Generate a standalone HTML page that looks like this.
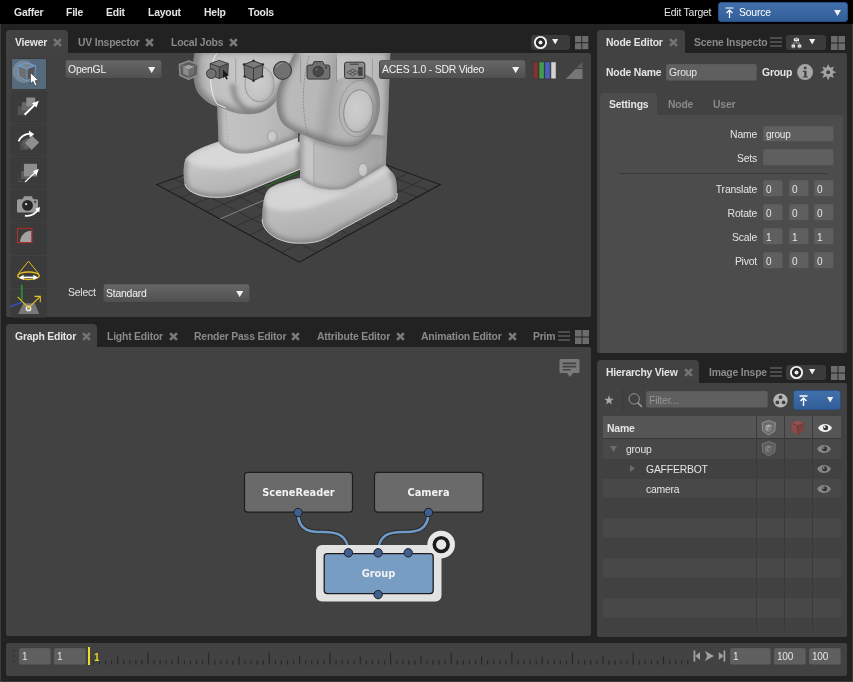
<!DOCTYPE html>
<html><head><meta charset="utf-8"><title>Gaffer</title>
<style>
*{box-sizing:border-box;margin:0;padding:0}
html,body{width:853px;height:682px;overflow:hidden;background:#222;}
body{position:relative;font-family:"Liberation Sans",sans-serif;font-size:10.4px;color:#e4e4e4;letter-spacing:-0.2px}
.abs{position:absolute}
.t{position:absolute;white-space:nowrap;line-height:14px;height:14px}
.t,.field,.dd{will-change:transform}
.r{text-align:right}
.b{font-weight:bold}
.dim{color:#898989}
#menubar{position:absolute;left:0;top:0;width:853px;height:24px;background:#000}
.panel{position:absolute;background:#424242;border-radius:0 2px 2px 2px}
.tab{position:absolute;background:#424242;border-radius:4px 4px 0 0}
.field{position:absolute;background:#5f5f5f;border-radius:2.5px;border:1px solid #5b5b5b;border-bottom-color:#505050;border-right-color:#545454;color:#e6e6e6;line-height:15px;padding-left:2px;font-size:10px;white-space:nowrap;overflow:hidden}
.dd{position:absolute;border-radius:3px;background:linear-gradient(#666,#505050);border:1px solid #4a4a4a;border-top-color:#5a5a5a;border-bottom-color:#404040;line-height:18px;padding-left:2px;color:#f2f2f2;font-size:10.4px;white-space:nowrap}
.tool{position:absolute;left:12px;width:34px;height:30px;background:#3b3b3b;box-shadow:0 0 0 0.7px #373737;border-radius:1px}
svg{position:absolute;overflow:visible}
.pg{left:0;top:0;width:853px;height:682px;pointer-events:none}
</style></head><body>
<svg width="0" height="0" style="position:absolute"><defs>
 <symbol id="x" viewBox="0 0 9 9"><path d="M1.1 1.1 L7.9 7.9 M7.9 1.1 L1.1 7.9" stroke="currentColor" stroke-width="2.6" fill="none"/></symbol>
 <symbol id="grid4" viewBox="0 0 14 14"><path d="M0 0h6.55v6.55h-6.55z M7.45 0h6.55v6.55h-6.55z M0 7.45h6.55v6.55h-6.55z M7.45 7.45h6.55v6.55h-6.55z" fill="#6c6c6c"/></symbol>
 <symbol id="burger" viewBox="0 0 12 10"><path d="M0 1h12 M0 5h12 M0 9h12" stroke="#787878" stroke-width="1.15"/></symbol>
 <symbol id="tri" viewBox="0 0 8 7"><path d="M0 0h8l-4 7z" fill="#f0f0f0"/></symbol>
 <symbol id="eye" viewBox="0 0 14 8"><path d="M0 4 C3 -1.2 11 -1.2 14 4 C11 9.2 3 9.2 0 4z" fill="currentColor"/><circle cx="7.6" cy="3.7" r="2.5" fill="#333"/><circle cx="6.6" cy="2.9" r="1" fill="currentColor"/></symbol>
 <symbol id="cic" viewBox="0 0 16 16"><path d="M8 0.5 L14.8 3 L14.2 11.4 L8 15.5 L1.8 11.4 L1.2 3Z" fill="#6a6a6a" stroke="#9c9c9c" stroke-width="0.9" stroke-linejoin="round"/><path d="M8 4.6 L11.7 6 L8 7.6 L4.3 6Z" fill="#b0b0b0"/><path d="M4.3 6 L8 7.6 V12.4 L4.5 10.6Z" fill="#9a9a9a"/><path d="M11.7 6 L8 7.6 V12.4 L11.5 10.6Z" fill="#7e7e7e"/></symbol>
</defs></svg>
<!-- MENUBAR -->
<div id="menubar">
 <span class="t b" style="left:14px;top:6px">Gaffer</span>
 <span class="t b" style="left:66px;top:6px">File</span>
 <span class="t b" style="left:106px;top:6px">Edit</span>
 <span class="t b" style="left:148px;top:6px">Layout</span>
 <span class="t b" style="left:204px;top:6px">Help</span>
 <span class="t b" style="left:248px;top:6px">Tools</span>
 <span class="t" style="left:664px;top:6px">Edit Target</span>
 <div class="abs" id="src" style="left:717.5px;top:2px;width:130.5px;height:20px;border-radius:3px;background:linear-gradient(#4270aa,#325e98);border:1px solid #2a4f84">
   <svg style="left:6px;top:4px" width="9" height="11" viewBox="0 0 9 11"><path d="M0.5 1h8 M4.5 11V3.2 M1.5 6 L4.5 3 L7.5 6" stroke="#fff" stroke-width="1.2" fill="none"/></svg>
   <span class="t" style="left:20px;top:3px;color:#fff">Source</span>
   <svg style="left:115.3px;top:6.5px" width="7" height="6"><use href="#tri"/></svg>
 </div>
</div>
<!-- winborder -->
<div class="abs" style="left:0;top:24px;width:1px;height:658px;background:#3c3c3c"></div>
<div class="abs" style="left:852px;top:24px;width:1px;height:658px;background:#3a3a3a"></div>
<div class="abs" style="left:0;top:680.6px;width:853px;height:1.4px;background:#3a3a3a"></div>

<!-- VIEWER PANEL -->
<div class="tab" style="left:6px;top:30px;width:62px;height:24px"></div>
<span class="t b" style="left:15px;top:36px">Viewer</span>
<svg style="left:52.7px;top:37.9px;color:#747474" width="9" height="9"><use href="#x"/></svg>
<span class="t b dim" style="left:78px;top:36px">UV Inspector</span>
<svg style="left:144.7px;top:37.9px;color:#7a7a7a" width="9" height="9"><use href="#x"/></svg>
<span class="t b dim" style="left:171px;top:36px">Local Jobs</span>
<svg style="left:228.7px;top:37.9px;color:#7a7a7a" width="9" height="9"><use href="#x"/></svg>
<!-- pin dropdown + grid -->
<div class="abs" style="left:530.5px;top:35px;width:39px;height:15px;border-radius:3px;background:#3b3b3b"></div>
<svg style="left:534px;top:36px" width="13" height="13" viewBox="0 0 13 13"><circle cx="6.5" cy="6.5" r="5.6" fill="#262626" stroke="#f2f2f2" stroke-width="1.9"/><circle cx="6.5" cy="6.5" r="2" fill="#f2f2f2"/></svg>
<svg style="left:552px;top:39px" width="6.4" height="5.4"><use href="#tri"/></svg>
<svg style="left:574.6px;top:35.8px" width="13.6" height="13.6"><use href="#grid4"/></svg>

<div class="panel" id="viewer" style="left:6px;top:53px;width:585px;height:264px;overflow:hidden;background:#414141">

<svg class="pg" style="left:-6px;top:-53px" width="853" height="682" viewBox="0 0 853 682">
<defs>
 <filter id="bl2.2" x="-20%" y="-20%" width="140%" height="140%"><feGaussianBlur stdDeviation="2.2"/></filter>
 <filter id="bl3" x="-20%" y="-20%" width="140%" height="140%"><feGaussianBlur stdDeviation="3"/></filter>
 <filter id="bl1.2" x="-20%" y="-20%" width="140%" height="140%"><feGaussianBlur stdDeviation="1.2"/></filter>
 <linearGradient id="gBody" x1="0" x2="1" y1="0" y2="0"><stop offset="0" stop-color="#c6c6c6"/><stop offset="0.5" stop-color="#c4c4c4"/><stop offset="0.9" stop-color="#b8b8b8"/><stop offset="1" stop-color="#aaaaaa"/></linearGradient>
 <linearGradient id="gLegR" x1="0" x2="1" y1="0" y2="0"><stop offset="0" stop-color="#c8c8c8"/><stop offset="0.155" stop-color="#c6c6c6"/><stop offset="0.16" stop-color="#bcbcbc"/><stop offset="0.6" stop-color="#b0b0b0"/><stop offset="0.9" stop-color="#a4a4a4"/><stop offset="1" stop-color="#b4b4b4"/></linearGradient>
 <linearGradient id="gLegL" x1="0" x2="1" y1="0" y2="0"><stop offset="0" stop-color="#b4b4b4"/><stop offset="0.12" stop-color="#c2c2c2"/><stop offset="0.6" stop-color="#bcbcbc"/><stop offset="1" stop-color="#acacac"/></linearGradient>
 <linearGradient id="gFootL" x1="0.3" y1="0" x2="0.55" y2="1"><stop offset="0" stop-color="#cecece"/><stop offset="0.45" stop-color="#c4c4c4"/><stop offset="0.8" stop-color="#b6b6b6"/><stop offset="1" stop-color="#a8a8a8"/></linearGradient>
 <linearGradient id="gFootR" x1="0.35" y1="0" x2="0.6" y2="1"><stop offset="0" stop-color="#cccccc"/><stop offset="0.4" stop-color="#c2c2c2"/><stop offset="0.8" stop-color="#b2b2b2"/><stop offset="1" stop-color="#a6a6a6"/></linearGradient>
 <linearGradient id="gHipL" x1="0" x2="1" y1="0" y2="0"><stop offset="0" stop-color="#a8a8a8"/><stop offset="0.18" stop-color="#c0c0c0"/><stop offset="0.45" stop-color="#c6c6c6"/><stop offset="1" stop-color="#c0c0c0"/></linearGradient>
 <linearGradient id="gHipR" x1="0" x2="1" y1="0" y2="0.15"><stop offset="0" stop-color="#a4a4a4"/><stop offset="0.2" stop-color="#bababa"/><stop offset="0.45" stop-color="#b8b8b8"/><stop offset="0.58" stop-color="#a4a4a4"/><stop offset="0.7" stop-color="#b6b6b6"/><stop offset="1" stop-color="#b4b4b4"/></linearGradient>
 <radialGradient id="gCap" cx="0.42" cy="0.45" r="0.7"><stop offset="0" stop-color="#cecece"/><stop offset="0.6" stop-color="#c4c4c4"/><stop offset="1" stop-color="#a8a8a8"/></radialGradient>
 <clipPath id="vclip"><rect x="6" y="53" width="586" height="264"/></clipPath>
</defs>
<g clip-path="url(#vclip)">
<path d="M168.4 190.9 L312.8 138.6 M174.1 178.6 L316.9 252.5 M180.5 197.5 L325.0 143.0 M190.7 172.8 L333.6 243.3 M193.1 204.4 L337.7 147.6 M206.6 167.2 L349.4 234.6 M206.2 211.5 L350.8 152.3 M221.7 161.9 L364.4 226.4 M234.4 226.9 L378.4 162.3 M250.3 152.0 L392.1 211.1 M249.5 235.1 L393.0 167.5 M263.7 147.3 L405.0 204.0 M265.3 243.7 L408.1 173.0 M276.6 142.8 L417.3 197.2 M281.9 252.7 L423.8 178.7 M289.0 138.5 L429.0 190.8" stroke="#2b2b2b" stroke-width="0.7" fill="none"/><path d="M156.8 184.6 L299.3 262.2 L440.2 184.6 L301.0 134.3 Z" stroke="#1d1d1d" stroke-width="1.1" fill="none"/>
<path d="M220.0 219.0 L364.3 157.2" stroke="#8a8a8a" stroke-width="0.9"/>
<!-- back body -->
<clipPath id="cp1"><path d="M296 50 L390.4 50 L388.5 106 L386 160 L385.5 168 L300.4 182 L300.4 120 Z"/></clipPath>
<path d="M296 50 L390.4 50 L388.5 106 L386 160 L385.5 168 L300.4 182 L300.4 120 Z" fill="url(#gBody)"/>
<g clip-path="url(#cp1)"><path d="M296 50 L390.4 50 L388.5 106 L386 160 L385.5 168 L300.4 182 L300.4 120 Z" fill="none" stroke="#6a6a6a" stroke-width="6" filter="url(#bl2.2)" opacity="0.5"/></g>

<!-- left foot -->
<clipPath id="cp2"><path d="M220 141 C205 146 190 152 185.5 159 C183 166 183.3 178 184.8 185 C187 192 198 196.5 210 197.6 C222 198.6 232 197 242 193.5 L300.4 169.5 L300.4 135 L297 138 Z"/></clipPath>
<path d="M220 141 C205 146 190 152 185.5 159 C183 166 183.3 178 184.8 185 C187 192 198 196.5 210 197.6 C222 198.6 232 197 242 193.5 L300.4 169.5 L300.4 135 L297 138 Z" fill="url(#gFootL)"/>
<g clip-path="url(#cp2)"><path d="M220 141 C205 146 190 152 185.5 159 C183 166 183.3 178 184.8 185 C187 192 198 196.5 210 197.6 C222 198.6 232 197 242 193.5 L300.4 169.5 L300.4 135 L297 138 Z" fill="none" stroke="#6a6a6a" stroke-width="7" filter="url(#bl2.2)" opacity="0.55"/><path d="M218 141 L192 150 L184 160 L200 167 L225 169 L250 165 L300 147 L300 135Z" fill="#dcdcdc" filter="url(#bl2.2)" opacity="0.8"/></g>

<path d="M184.8 184 C187 191 198 196 210 197 C222 198 232 196.5 242 193 L300.4 169" stroke="#dedede" stroke-width="0.8" fill="none"/>
<path d="M265.4 187 L281 180 L298.5 172.6" stroke="#1e6e1e" stroke-width="1.2" fill="none"/>
<!-- left leg -->
<clipPath id="cp3"><path d="M217 100 L218.6 142 C222 148 232 153 242 153.6 C252 154 268 149 281 144 L298 137.5 L298 96 Z"/></clipPath>
<path d="M217 100 L218.6 142 C222 148 232 153 242 153.6 C252 154 268 149 281 144 L298 137.5 L298 96 Z" fill="url(#gLegL)"/>
<g clip-path="url(#cp3)"><path d="M217 100 L218.6 142 C222 148 232 153 242 153.6 C252 154 268 149 281 144 L298 137.5 L298 96 Z" fill="none" stroke="#6a6a6a" stroke-width="6" filter="url(#bl2.2)" opacity="0.6"/></g>

<ellipse cx="272.3" cy="136.7" rx="5" ry="6" fill="url(#gCap)" stroke="#989898" stroke-width="0.8"/>
<path d="M226 108 L228 148" stroke="#a0a0a0" stroke-width="0.6" stroke-dasharray="2 1.5"/>
<!-- mid connector -->
<path d="M270 48 L300 48 L300 100 L276 100 Z" fill="#c2c2c2"/>
<!-- left hip -->
<clipPath id="cp4"><path d="M196 48 C192.3 60 191.6 78 197 91 C203 100 211 105 219 107 L232 112 C243 115.5 258 115 266 110 C274 105 280 97 282 88 L300 70 L300 48 Z"/></clipPath>
<path d="M196 48 C192.3 60 191.6 78 197 91 C203 100 211 105 219 107 L232 112 C243 115.5 258 115 266 110 C274 105 280 97 282 88 L300 70 L300 48 Z" fill="url(#gHipL)"/>
<g clip-path="url(#cp4)"><path d="M196 48 C192.3 60 191.6 78 197 91 C203 100 211 105 219 107 L232 112 C243 115.5 258 115 266 110 C274 105 280 97 282 88 L300 70 L300 48 Z" fill="none" stroke="#6a6a6a" stroke-width="9" filter="url(#bl3)" opacity="0.75"/><path d="M233 84 C233 98 240 108 251 112 C258 114 268 110 276 103" stroke="#7a7a7a" stroke-width="5.5" fill="none" filter="url(#bl2.2)" opacity="0.75"/></g>

<path d="M217 53.7 C209 62 208 90 217 104 L226 108" stroke="#f4f4f4" stroke-width="0.9" fill="none"/>
<ellipse cx="259.5" cy="84" rx="14.5" ry="18" fill="url(#gCap)" stroke="#8e8e8e" stroke-width="0.8"/>
<path d="M298.8 126 L298.8 142" stroke="#4a4a4a" stroke-width="1.6"/>
<!-- right leg -->
<clipPath id="cp5"><path d="M300.4 130 L300.4 178 C304 182 310 185 316 187 C324 189.5 336 190.5 344 188.6 C352 186 358 181 363 178 L385.5 165 L386.5 136 L371 134 C366 141 358 147 350 147.6 C340 147.5 328 144.5 316 140 Z"/></clipPath>
<path d="M300.4 130 L300.4 178 C304 182 310 185 316 187 C324 189.5 336 190.5 344 188.6 C352 186 358 181 363 178 L385.5 165 L386.5 136 L371 134 C366 141 358 147 350 147.6 C340 147.5 328 144.5 316 140 Z" fill="url(#gLegR)"/>
<g clip-path="url(#cp5)"><path d="M300.4 130 L300.4 178 C304 182 310 185 316 187 C324 189.5 336 190.5 344 188.6 C352 186 358 181 363 178 L385.5 165 L386.5 136 L371 134 C366 141 358 147 350 147.6 C340 147.5 328 144.5 316 140 Z" fill="none" stroke="#6a6a6a" stroke-width="5" filter="url(#bl2.2)" opacity="0.5"/></g>

<path d="M313.8 140.5 L313.8 185.5" stroke="#a2a2a2" stroke-width="0.8"/>
<ellipse cx="363" cy="169.9" rx="4.8" ry="6.6" fill="url(#gCap)" stroke="#949494" stroke-width="0.8"/>
<!-- right hip -->
<clipPath id="cp6"><path d="M296 50 C288 66 279 82 277.5 92 C275 104 277 118 284 125 C290 130 296 132.5 300.3 133.5 L316 140 C328 144.5 340 147.5 350 147.6 C358 147 366 141 371 134 C377 125 380 114 380 104 C380 93 377 83 371 77.5 C366 73.5 358 72.5 350 74.4 L337 80 L337 50 Z"/></clipPath>
<path d="M296 50 C288 66 279 82 277.5 92 C275 104 277 118 284 125 C290 130 296 132.5 300.3 133.5 L316 140 C328 144.5 340 147.5 350 147.6 C358 147 366 141 371 134 C377 125 380 114 380 104 C380 93 377 83 371 77.5 C366 73.5 358 72.5 350 74.4 L337 80 L337 50 Z" fill="url(#gHipR)"/>
<g clip-path="url(#cp6)"><path d="M296 50 C288 66 279 82 277.5 92 C275 104 277 118 284 125 C290 130 296 132.5 300.3 133.5 L316 140 C328 144.5 340 147.5 350 147.6 C358 147 366 141 371 134 C377 125 380 114 380 104 C380 93 377 83 371 77.5 C366 73.5 358 72.5 350 74.4" fill="none" stroke="#6a6a6a" stroke-width="9" filter="url(#bl3)" opacity="0.8"/></g>

<path d="M309 56 C302 80 301 115 309 137" stroke="#777" stroke-width="0.6" fill="none" stroke-dasharray="2 1.2"/>
<ellipse cx="359" cy="108.5" rx="19.5" ry="28.5" fill="none" stroke="#8e8e8e" stroke-width="0.7" transform="rotate(8 359 108.5)"/><ellipse cx="358.4" cy="111" rx="14.5" ry="21.3" fill="url(#gCap)" stroke="#808080" stroke-width="0.8" transform="rotate(8 358.4 111)"/>
<!-- front foot -->
<clipPath id="cp7"><path d="M300.4 178 C290 180 275 184 268.8 189 C264 194 262.5 205 262.2 219 C262 226 266 232 275.8 237.9 C283 241.5 290 243 296.9 243.2 C305 243.4 312 243 318 241.4 C326 239 333 234.5 339 230.8 L395.4 200.3 C397.5 198 397.5 190 395.8 179.2 C394.5 175 393 173 390.7 171 L385.5 165 L363 178 C358 181 352 186 344 188.6 C336 190.5 324 189.5 316 187 C310 185 304 182 300.4 178 Z"/></clipPath>
<path d="M300.4 178 C290 180 275 184 268.8 189 C264 194 262.5 205 262.2 219 C262 226 266 232 275.8 237.9 C283 241.5 290 243 296.9 243.2 C305 243.4 312 243 318 241.4 C326 239 333 234.5 339 230.8 L395.4 200.3 C397.5 198 397.5 190 395.8 179.2 C394.5 175 393 173 390.7 171 L385.5 165 L363 178 C358 181 352 186 344 188.6 C336 190.5 324 189.5 316 187 C310 185 304 182 300.4 178 Z" fill="url(#gFootR)"/>
<g clip-path="url(#cp7)"><path d="M300.4 178 C290 180 275 184 268.8 189 C264 194 262.5 205 262.2 219 C262 226 266 232 275.8 237.9 C283 241.5 290 243 296.9 243.2 C305 243.4 312 243 318 241.4 C326 239 333 234.5 339 230.8 L395.4 200.3 C397.5 198 397.5 190 395.8 179.2 C394.5 175 393 173 390.7 171 L385.5 165 L363 178 C358 181 352 186 344 188.6 C336 190.5 324 189.5 316 187 C310 185 304 182 300.4 178 Z" fill="none" stroke="#6a6a6a" stroke-width="7" filter="url(#bl2.2)" opacity="0.55"/><path d="M268.8 187 L262 198 L266.4 207.4 L285 211 L308.6 208.5 L343.8 195.6 L381.3 177 L392 171 L385.5 164 L363 178 L344 188.6 L316 187 L300.4 177Z" fill="#dadada" filter="url(#bl2.2)" opacity="0.8"/></g>

<path d="M262.2 219 C262 226 266 232 275.8 237.9 C283 241.5 290 243 296.9 243.2 C305 243.4 312 243 318 241.4 C326 239 333 234.5 339 230.8 L395.4 200.3 C397 199 397.3 196 397.2 193" stroke="#e0e0e0" stroke-width="0.8" fill="none"/>
</g>
</svg>
</div>
<!-- tools -->
<div class="tool" style="top:59px;background:#566a7e;overflow:hidden"></div>
<div class="tool" style="top:92px"></div>
<div class="tool" style="top:125px"></div>
<div class="tool" style="top:158px"></div>
<div class="tool" style="top:191px"></div>
<div class="tool" style="top:224px"></div>
<div class="tool" style="top:257px"></div>
<div class="tool" style="top:290px;height:27px"></div>
<!-- toolbar -->
<div class="dd" style="left:65px;top:60px;width:97px;height:19px">OpenGL</div>
<svg style="left:148px;top:66.7px" width="7.4" height="6.2"><use href="#tri"/></svg>
<div class="dd" style="left:379px;top:60px;width:147px;height:19px">ACES 1.0 - SDR Video</div>
<svg style="left:512.3px;top:66.7px" width="7.4" height="6.2"><use href="#tri"/></svg>
<span class="t" style="left:68px;top:286px">Select</span>
<div class="dd" style="left:103px;top:284px;width:147px;height:19px">Standard</div>
<svg style="left:235.5px;top:290.5px" width="7.4" height="6.2"><use href="#tri"/></svg>
<!-- RGB swatch -->
<svg class="pg" width="853" height="682" viewBox="0 0 853 682">
<g stroke="#333" stroke-width="0.6">
<rect x="533" y="61.9" width="5.2" height="17" fill="#823232"/>
<rect x="539" y="61.9" width="5.2" height="17" fill="#429c4e"/>
<rect x="544.9" y="61.9" width="5.2" height="17" fill="#4a60c2"/>
<rect x="550.9" y="61.9" width="5.2" height="17" fill="#d2d2d2"/>
</g>
<path d="M565.8 79 H582.5 V69 H575.5Z" fill="#767676"/>
<path d="M576.3 68 L582.5 61.8 V68Z" fill="#5c5c5c"/>
</svg>
<svg class="pg" width="853" height="682" viewBox="0 0 853 682">
 <!-- tool1: selection -->
 <clipPath id="t1c"><rect x="12" y="59" width="34" height="30"/></clipPath><circle cx="23.8" cy="71.6" r="11.3" fill="#ffffff" fill-opacity="0.19" clip-path="url(#t1c)"/>
 <path d="M17.7 65.7 L27 68.8 L27 81.1 L18.8 76.5Z" fill="#6e6e6e"/>
 <path d="M27 68.8 L35.5 65.7 L34.9 76 L27 81.1Z" fill="#545454"/>
 <path d="M26.5 63 L35.5 65.7 L34.9 76 L27 81.1 L18.8 76.5 L17.7 65.7Z M17.7 65.7 L27 68.8 L35.5 65.7 M27 68.8V81.1" fill="none" stroke="#6fa3da" stroke-width="0.9" stroke-linejoin="round"/>
 <path d="M30.4 72.6 L30.4 83.8 L33 81.5 L35 86 L37 85.1 L35.1 80.7 L38.6 80.6Z" fill="#fff" stroke="#333" stroke-width="0.7" stroke-linejoin="round"/>
 <!-- tool2: translate -->
 <rect x="17.7" y="106.3" width="8.5" height="8.7" fill="#525252"/>
 <rect x="21.8" y="102.2" width="8.5" height="8.3" fill="#686868"/>
 <rect x="26.3" y="97.5" width="8.9" height="8.8" fill="#8c8c8c"/>
 <path d="M24.6 114.8 L35 104.6" stroke="#fff" stroke-width="2" fill="none"/>
 <path d="M38.9 100.8 L32 103.2 L36.5 107.6Z" fill="#fff"/>
 <!-- tool3: rotate -->
 <rect x="20.1" y="143" width="8.4" height="6.8" fill="#4e4e4e"/>
 <path d="M21.5 141.5 L28 137.5 L32 146 L25 149.7Z" fill="#5c5c5c"/>
 <path d="M32.1 135.8 L39.1 142.5 L31.6 149.9 L24.9 143Z" fill="#8e8e8e"/>
 <path d="M18.6 141.4 C20.5 136.5 25 134 30 133.6" stroke="#fff" stroke-width="1.8" fill="none"/>
 <path d="M28.8 130.6 L34.2 134.2 L29.8 137.6Z" fill="#fff"/>
 <!-- tool4: scale -->
 <path d="M19 178v3.5h3.8" stroke="#555" stroke-width="0.8" fill="none"/>
 <rect x="21.1" y="171" width="8" height="8" fill="#5c5c5c"/>
 <rect x="23.9" y="163.8" width="13.1" height="12.6" fill="#8e8e8e"/>
 <path d="M25 182 L35.5 172" stroke="#fff" stroke-width="1.1" fill="none"/>
 <path d="M38.9 168.8 L32.8 171.2 L36.6 175.2Z" fill="#fff"/>
 <!-- tool5: camera -->
 <path d="M18.5 199.3 h4 l1.6 -3 h7.6 l1.6 3 h3.2 a1.5 1.5 0 0 1 1.5 1.5 v10.3 a1.5 1.5 0 0 1 -1.5 1.5 h-18 a1.5 1.5 0 0 1 -1.5 -1.5 v-10.3 a1.5 1.5 0 0 1 1.5 -1.5z" fill="#9a9a9a"/>
 <circle cx="27.5" cy="205.4" r="5.4" fill="#262626"/>
 <rect x="25.2" y="203.2" width="1.9" height="1.9" fill="#e8e8e8"/>
 <circle cx="35.2" cy="201.8" r="1.1" fill="#333"/>
 <path d="M24.9 215.6 C30 216.6 35 214 38 209.8" stroke="#fff" stroke-width="1.8" fill="none"/>
 <path d="M40 207 L35.2 208.8 L39.2 212.4Z" fill="#fff"/>
 <!-- tool6: crop -->
 <path d="M20.1 242.2 A11.4 11.4 0 0 1 31.6 230.8 L31.6 242.2Z" fill="#a2a2a2"/>
 <rect x="17.5" y="228.4" width="14.4" height="14.3" fill="none" stroke="#b92b2b" stroke-width="1"/>
 <!-- tool7: light cone -->
 <path d="M18.3 273.8 L28.5 261.2 L38.8 273.8" stroke="#e6bf1e" stroke-width="1" fill="none"/>
 <ellipse cx="28.5" cy="275.8" rx="10.8" ry="3.8" fill="none" stroke="#e6bf1e" stroke-width="1.3"/>
 <path d="M23 277.4 H34" stroke="#fff" stroke-width="1.6"/>
 <path d="M19 277.4 l4.6 -2.6 v5.2z M38 277.4 l-4.6 -2.6 v5.2z" fill="#fff"/>
 <!-- tool8: light position -->
 <path d="M23.4 303.3 H34.7 L39.3 314 H18Z" fill="#787878"/>
 <circle cx="28.5" cy="308.4" r="2.9" fill="#e8e8e8"/><circle cx="28.5" cy="308.4" r="1.3" fill="#777"/>
 <path d="M21.8 284.6V300.4" stroke="#2a8a2f" stroke-width="1.8"/>
 <path d="M9.5 307 L21.8 302.3" stroke="#2f4fbe" stroke-width="1.5"/>
 <path d="M17.7 296.9 L28.5 307.9 L40 296.6 M34.4 296.4 H40.3 V302.3" stroke="#e6bf1e" stroke-width="1.1" fill="none"/>
 <!-- toolbar icon 1 -->
 <g stroke-linejoin="round">
 <path d="M188.7 61 L198 64.5 L197.4 75.2 L188.7 79.2 L180 75.2 L179.4 64.5Z" fill="#5e5e5e" stroke="#8c8c8c" stroke-width="1.5"/>
 <path d="M188.7 79.2 V70 M179.6 64.6 L188.7 68.4 L197.8 64.6" stroke="#8c8c8c" stroke-width="0.8" fill="none" opacity="0.7"/>
 <path d="M188.7 64.8 L194.3 66.9 L188.7 69.4 L183 66.9Z" fill="#a2a2a2"/>
 <path d="M183 66.9 L188.7 69.4 V76.3 L183.3 73.8Z" fill="#8c8c8c"/>
 <path d="M194.3 66.9 L188.7 69.4 V76.3 L194 73.8Z" fill="#6e6e6e"/>
 <!-- toolbar icon 2 -->
 <path d="M219.3 60.4 L228.3 63.6 L219.3 67Z M219.3 60.4 L210.2 63.6 L219.3 67Z" fill="#7e7e7e"/>
 <path d="M210.2 63.6 L219.3 67 V78.6 L210.6 75Z" fill="#6e6e6e"/>
 <path d="M228.3 63.6 L219.3 67 V78.6 L227.8 75Z" fill="#5a5a5a"/>
 <path d="M219.3 60.4 L228.3 63.6 L227.8 75 L219.3 78.6 L210.6 75 L210.2 63.6Z M210.2 63.6 L219.3 67 L228.3 63.6 M219.3 67V78.6" fill="none" stroke="#303030" stroke-width="0.9"/>
 <circle cx="211.3" cy="73.7" r="4.8" fill="#727272" stroke="#303030" stroke-width="0.9"/>
 <path d="M223 69.6 L223 78 L224.9 76.4 L226.3 79.6 L227.8 78.9 L226.4 75.8 L228.8 75.6Z" fill="#1a1a1a"/>
 <!-- toolbar icon 3 -->
 <path d="M253.5 60.8 L262.9 64.4 L262.3 76.4 L253.5 80.7 L244.6 76.4 L244 64.4Z" fill="#6e6e6e"/>
 <path d="M253.5 60.8 L262.9 64.4 L253.5 68.3 L244 64.4Z" fill="#7a7a7a"/>
 <path d="M253.5 60.8 L262.9 64.4 L262.3 76.4 L253.5 80.7 L244.6 76.4 L244 64.4Z M244 64.4 L253.5 68.3 L262.9 64.4 M253.5 68.3V80.7" fill="none" stroke="#303030" stroke-width="0.9"/>
 <g fill="#2a2a2a"><circle cx="253.5" cy="60.8" r="1.2"/><circle cx="262.9" cy="64.4" r="1.2"/><circle cx="262.3" cy="76.4" r="1.2"/><circle cx="253.5" cy="80.7" r="1.2"/><circle cx="244.6" cy="76.4" r="1.2"/><circle cx="244" cy="64.4" r="1.2"/></g>
 </g>
 <!-- sphere -->
 <circle cx="282.5" cy="70.4" r="9" fill="#707070" stroke="#303030" stroke-width="1"/>
 <path d="M276.3 67.5 C277.5 65 280 63.6 282.3 63.4" stroke="#a0a0a0" stroke-width="0.9" fill="none"/>
 <!-- camera -->
 <path d="M309 65 h3.4 l1.7 -3.4 h8.6 l1.7 3.4 h3.4 a2 2 0 0 1 2 2 v10.1 a2 2 0 0 1 -2 2 h-18.8 a2 2 0 0 1 -2 -2 v-10.1 a2 2 0 0 1 2 -2z" fill="#707070" stroke="#303030" stroke-width="0.9"/>
 <circle cx="318.2" cy="71.4" r="5.2" fill="#484848" stroke="#303030" stroke-width="0.8"/>
 <circle cx="316.6" cy="69.4" r="0.8" fill="#8a8a8a"/>
 <circle cx="326" cy="67.5" r="0.9" fill="#303030"/>
 <!-- render pane icon -->
 <rect x="344.6" y="62.2" width="20.2" height="16.2" rx="2" fill="#8c8c8c" stroke="#303030" stroke-width="1"/>
 <path d="M349.8 64.2 H358.8" stroke="#303030" stroke-width="0.9"/>
 <rect x="358.2" y="67" width="4.4" height="8.8" fill="#444"/>
 <path d="M346.8 72.4 L352.7 69 L358.4 72.4 L352.7 75.8Z M349.7 70.7 L355.6 74.1 M355.6 70.7 L349.7 74.1" fill="none" stroke="#3c3c3c" stroke-width="0.7"/>
 <!-- separators -->
 <path d="M235.7 58.5V82.5 M300.6 58.5V82.5 M336.5 58.5V82.5 M372.4 58.5V82.5" stroke="#7a7a7a" stroke-width="0.6" opacity="0.8"/>
</svg>
<!-- GRAPH EDITOR PANEL -->
<div class="tab" style="left:6px;top:324px;width:91px;height:24px"></div>
<span class="t b" style="left:15px;top:330px">Graph Editor</span>
<svg style="left:81.7px;top:331.9px;color:#747474" width="9" height="9"><use href="#x"/></svg>
<span class="t b dim" style="left:107px;top:330px">Light Editor</span>
<svg style="left:168.7px;top:331.9px;color:#7a7a7a" width="9" height="9"><use href="#x"/></svg>
<span class="t b dim" style="left:194px;top:330px">Render Pass Editor</span>
<svg style="left:290.7px;top:331.9px;color:#7a7a7a" width="9" height="9"><use href="#x"/></svg>
<span class="t b dim" style="left:317px;top:330px">Attribute Editor</span>
<svg style="left:395.7px;top:331.9px;color:#7a7a7a" width="9" height="9"><use href="#x"/></svg>
<span class="t b dim" style="left:421px;top:330px">Animation Editor</span>
<svg style="left:507.7px;top:331.9px;color:#7a7a7a" width="9" height="9"><use href="#x"/></svg>
<span class="t b dim" style="left:533.3px;top:330px">Prim</span>
<svg style="left:558px;top:331px" width="12" height="10"><use href="#burger"/></svg>
<svg style="left:574.5px;top:329.5px" width="14" height="14"><use href="#grid4"/></svg>
<div class="panel" id="graph" style="left:6px;top:347px;width:585px;height:289px;overflow:hidden;background:#424242"></div>
<svg class="pg" width="853" height="682" viewBox="0 0 853 682" style="font-family:'DejaVu Sans',sans-serif;font-weight:bold;font-size:9.8px;letter-spacing:0">
 <!-- annotation icon -->
 <path d="M561 359 h17 a1.5 1.5 0 0 1 1.5 1.5 v11 a1.5 1.5 0 0 1 -1.5 1.5 h-5 l-3 4 l-3 -4 h-6 a1.5 1.5 0 0 1 -1.5 -1.5 v-11 a1.5 1.5 0 0 1 1.5 -1.5z" fill="#7a7a7a"/>
 <path d="M562.6 363.4h13.6 M562.6 366.6h13.6 M562.6 369.8h8" stroke="#424242" stroke-width="1.6"/>
 <!-- connections -->
 <path d="M298 512.5 C298 532 312 532 323 532 C336 532 348.4 534 348.4 552.8" stroke="#2a2a2a" stroke-width="4.4" fill="none"/>
 <path d="M428.5 512.5 C428.5 532 414 532 403 532 C390 532 378.1 534 378.1 552.8" stroke="#2a2a2a" stroke-width="4.4" fill="none"/>
 <path d="M298 512.5 C298 532 312 532 323 532 C336 532 348.4 534 348.4 552.8" stroke="#6f9bc8" stroke-width="2.6" fill="none"/>
 <path d="M428.5 512.5 C428.5 532 414 532 403 532 C390 532 378.1 534 378.1 552.8" stroke="#6f9bc8" stroke-width="2.6" fill="none"/>
 <!-- SceneReader -->
 <rect x="244.5" y="472.3" width="108" height="39.8" rx="3" fill="#6a6a6a" stroke="#1e1e1e" stroke-width="1.2"/>
 <text x="298.5" y="495.8" text-anchor="middle" fill="#f2f2f2">SceneReader</text>
 <!-- Camera -->
 <rect x="374.5" y="472.3" width="108.5" height="39.8" rx="3" fill="#6a6a6a" stroke="#1e1e1e" stroke-width="1.2"/>
 <text x="428.5" y="495.8" text-anchor="middle" fill="#f2f2f2">Camera</text>
 <!-- Group -->
 <rect x="316" y="545" width="125.5" height="56.5" rx="6" fill="#e2e2e2"/>
 <circle cx="441.2" cy="544.6" r="13.8" fill="#e8e8e8"/>
 <circle cx="441.2" cy="544.6" r="6.9" fill="none" stroke="#1c1c1c" stroke-width="3.6"/>
 <rect x="324.2" y="553.6" width="109" height="40" rx="3" fill="#789dc3" stroke="#1c1c1c" stroke-width="1.3"/>
 <text x="378.5" y="577.4" text-anchor="middle" fill="#f2f2f2">Group</text>
 <!-- nodules -->
 <g fill="#3f5f8f" stroke="#1e1e1e" stroke-width="1">
  <circle cx="298" cy="512.5" r="4.2"/><circle cx="428.5" cy="512.5" r="4.2"/>
  <circle cx="348.4" cy="552.8" r="4.2"/><circle cx="378.1" cy="552.8" r="4.2"/><circle cx="408.2" cy="552.8" r="4.2"/>
  <circle cx="378.1" cy="594.6" r="4.2"/>
 </g>
</svg>
<!-- NODE EDITOR PANEL -->
<div class="tab" style="left:597px;top:30px;width:88px;height:24px"></div>
<span class="t b" style="left:606px;top:36px">Node Editor</span>
<svg style="left:668.7px;top:37.9px;color:#747474" width="9" height="9"><use href="#x"/></svg>
<span class="t b dim" style="left:694px;top:36px">Scene Inspecto</span>
<svg style="left:770px;top:37px" width="12" height="10"><use href="#burger"/></svg>
<div class="abs" style="left:786px;top:35px;width:39.5px;height:15px;border-radius:3px;background:#3b3b3b"></div>
<svg class="pg" width="853" height="682" viewBox="0 0 853 682"><path d="M796.4 37v1.5 M796.4 41.2v1.7 M793.3 44.6v-1.7h6.2v1.7 M793.3 47.4v1 M799.5 47.4v1" stroke="#c8c8c8" stroke-width="0.6" fill="none"/><rect x="793.8" y="38.4" width="5.2" height="2.8" fill="#f4f4f4"/><rect x="795" y="39.5" width="2.8" height="0.6" fill="#555"/><rect x="791.6" y="44.6" width="3.5" height="2.9" fill="#f4f4f4"/><rect x="797.7" y="44.6" width="3.6" height="2.9" fill="#f4f4f4"/><rect x="792.6" y="45.8" width="1.5" height="0.6" fill="#555"/><rect x="798.8" y="45.8" width="1.5" height="0.6" fill="#555"/></svg>
<svg style="left:809px;top:39px" width="6.4" height="5.4"><use href="#tri"/></svg>
<svg style="left:830.5px;top:35.5px" width="14" height="14"><use href="#grid4"/></svg>
<div class="panel" id="nodeed" style="left:597px;top:53px;width:250px;height:299.5px"></div>
<span class="t b" style="left:606px;top:66px">Node Name</span>
<div class="field" style="left:666px;top:64px;width:91px;height:17px;line-height:15px;font-size:10.4px">Group</div>
<span class="t b" style="left:762px;top:66px">Group</span>
<svg style="left:797px;top:63.9px" width="16.2" height="16.2" viewBox="0 0 17 17"><circle cx="8.5" cy="8.5" r="8.4" fill="#a6a6a6"/><path d="M6.1 7h3.9v6h1.5v1.3h-5.6v-1.3h1.7v-4.7h-1.5z" fill="#424242"/><circle cx="8.6" cy="4.1" r="1.55" fill="#424242"/></svg>
<svg style="left:820px;top:64px" width="16.4" height="16.4" viewBox="-8.3 -8.3 16.6 16.6"><g fill="#a4a4a4"><circle r="4.9"/><path d="M-1.7 -4.2 L0 -8.3 L1.7 -4.2Z" transform="rotate(0)"/><path d="M-1.7 -4.2 L0 -8.3 L1.7 -4.2Z" transform="rotate(45)"/><path d="M-1.7 -4.2 L0 -8.3 L1.7 -4.2Z" transform="rotate(90)"/><path d="M-1.7 -4.2 L0 -8.3 L1.7 -4.2Z" transform="rotate(135)"/><path d="M-1.7 -4.2 L0 -8.3 L1.7 -4.2Z" transform="rotate(180)"/><path d="M-1.7 -4.2 L0 -8.3 L1.7 -4.2Z" transform="rotate(225)"/><path d="M-1.7 -4.2 L0 -8.3 L1.7 -4.2Z" transform="rotate(270)"/><path d="M-1.7 -4.2 L0 -8.3 L1.7 -4.2Z" transform="rotate(315)"/></g><circle r="2" fill="#424242"/></svg>
<!-- inner tabs -->
<div class="abs" style="left:600px;top:93px;width:57px;height:24px;background:#4c4c4c;border-radius:4px 4px 0 0"></div>
<div class="abs" style="left:600px;top:115px;width:243px;height:238px;background:#4c4c4c;border-radius:0 2px 0 0"></div>
<span class="t b" style="left:609px;top:98px">Settings</span>
<span class="t b dim" style="left:668px;top:98px">Node</span>
<span class="t b dim" style="left:713px;top:98px">User</span>
<span class="t r" style="left:657px;width:100px;top:128px">Name</span>
<div class="field" style="padding-top:1px;left:763px;top:126px;width:71px;height:16px;line-height:14px">group</div>
<span class="t r" style="left:657px;width:100px;top:152px">Sets</span>
<div class="field" style="padding-top:1px;left:763px;top:149px;width:71px;height:17px"></div>
<div class="abs" style="left:619px;top:172.5px;width:208px;height:1px;background:#3a3a3a"></div>
<span class="t r" style="left:657px;width:100px;top:183px">Translate</span>
<div class="field" style="padding-top:1px;left:763px;top:180px;width:20px;height:17px">0</div><div class="field" style="padding-top:1px;left:788.5px;top:180px;width:20px;height:17px">0</div><div class="field" style="padding-top:1px;left:814px;top:180px;width:20px;height:17px">0</div>
<span class="t r" style="left:657px;width:100px;top:207px">Rotate</span>
<div class="field" style="padding-top:1px;left:763px;top:204px;width:20px;height:17px">0</div><div class="field" style="padding-top:1px;left:788.5px;top:204px;width:20px;height:17px">0</div><div class="field" style="padding-top:1px;left:814px;top:204px;width:20px;height:17px">0</div>
<span class="t r" style="left:657px;width:100px;top:231px">Scale</span>
<div class="field" style="padding-top:1px;left:763px;top:228px;width:20px;height:17px">1</div><div class="field" style="padding-top:1px;left:788.5px;top:228px;width:20px;height:17px">1</div><div class="field" style="padding-top:1px;left:814px;top:228px;width:20px;height:17px">1</div>
<span class="t r" style="left:657px;width:100px;top:255px">Pivot</span>
<div class="field" style="padding-top:1px;left:763px;top:252px;width:20px;height:17px">0</div><div class="field" style="padding-top:1px;left:788.5px;top:252px;width:20px;height:17px">0</div><div class="field" style="padding-top:1px;left:814px;top:252px;width:20px;height:17px">0</div>
<!-- HIERARCHY PANEL -->
<div class="tab" style="left:597px;top:360px;width:102px;height:24px"></div>
<span class="t b" style="left:606px;top:366px">Hierarchy View</span>
<svg style="left:683.7px;top:367.9px;color:#747474" width="9" height="9"><use href="#x"/></svg>
<span class="t b dim" style="left:709px;top:366px">Image Inspe</span>
<svg style="left:770px;top:367px" width="12" height="10"><use href="#burger"/></svg>
<div class="abs" style="left:786px;top:365px;width:39.5px;height:15px;border-radius:3px;background:#3b3b3b"></div>
<svg style="left:789.5px;top:366px" width="13" height="13" viewBox="0 0 13 13"><circle cx="6.5" cy="6.5" r="5.6" fill="#262626" stroke="#f2f2f2" stroke-width="1.9"/><circle cx="6.5" cy="6.5" r="2" fill="#f2f2f2"/></svg>
<svg style="left:809px;top:369px" width="6.4" height="5.4"><use href="#tri"/></svg>
<svg style="left:830.5px;top:365.5px" width="14" height="14"><use href="#grid4"/></svg>
<div class="panel" id="hier" style="left:597px;top:383px;width:250px;height:253.5px"></div>
<!-- filter row -->
<svg style="left:603.5px;top:395px" width="10" height="10" viewBox="0 0 10 10"><path d="M5 0.3 L6.2 3.7 L9.8 3.8 L6.9 6 L7.9 9.5 L5 7.4 L2.1 9.5 L3.1 6 L0.2 3.8 L3.8 3.7z" fill="#a8a8a8"/></svg>
<div class="abs" style="left:622px;top:388px;width:1px;height:24px;background:#3a3a3a"></div>
<svg style="left:628px;top:392.6px" width="14.5" height="14.5" viewBox="0 0 14.5 14.5"><circle cx="6.2" cy="5.9" r="5.2" fill="none" stroke="#969696" stroke-width="1"/><path d="M10 9.8 L13.4 13.3" stroke="#969696" stroke-width="1.7" stroke-linecap="round"/></svg>
<div class="field" style="left:645.5px;top:391px;width:122px;height:17px;color:#949494;padding-top:1px;font-size:10.4px">Filter...</div>
<svg style="left:772.5px;top:392.5px" width="15" height="15" viewBox="0 0 15 15"><circle cx="7.5" cy="7.5" r="7.1" fill="#b6b6b6"/><circle cx="7.5" cy="4.2" r="1.9" fill="#424242"/><circle cx="4.4" cy="9.4" r="1.9" fill="#424242"/><circle cx="10.6" cy="9.4" r="1.9" fill="#424242"/></svg>
<div class="abs" style="left:793px;top:390px;width:47.5px;height:19.6px;border-radius:3px;background:linear-gradient(#4270aa,#325e98);border:1px solid #2a4f84"></div>
<svg style="left:799px;top:394.5px" width="9" height="11" viewBox="0 0 9 11"><path d="M0.5 1h8 M4.5 11V3.2 M1.5 6 L4.5 3 L7.5 6" stroke="#fff" stroke-width="1.4" fill="none"/></svg>
<svg style="left:826.5px;top:397px" width="6.4" height="5.4"><use href="#tri"/></svg>
<!-- tree -->
<div class="abs" style="left:603px;top:416px;width:238px;height:216px;background:#414141;overflow:hidden">
 <div class="abs" style="left:0;top:0;width:239px;height:23px;background:#565656;border-bottom:1px solid #383838"></div>
 <div class="abs" style="left:0;top:23px;width:239px;height:20px;background:#484848"></div>
 <div class="abs" style="left:0;top:43px;width:239px;height:20px;background:#414141"></div>
 <div class="abs" style="left:0;top:63px;width:239px;height:19px;background:#484848"></div>
 <div class="abs" style="left:0;top:82px;width:239px;height:20px;background:#414141"></div>
 <div class="abs" style="left:0;top:102px;width:239px;height:20px;background:#484848"></div>
 <div class="abs" style="left:0;top:122px;width:239px;height:20px;background:#414141"></div>
 <div class="abs" style="left:0;top:142px;width:239px;height:20px;background:#484848"></div>
 <div class="abs" style="left:0;top:162px;width:239px;height:20px;background:#414141"></div>
 <div class="abs" style="left:0;top:182px;width:239px;height:20px;background:#484848"></div>
 <div class="abs" style="left:0;top:202px;width:239px;height:20px;background:#414141"></div>
 <div class="abs" style="left:153px;top:0;width:1px;height:216px;background:#3a3a3a"></div>
 <div class="abs" style="left:181px;top:0;width:1px;height:216px;background:#3a3a3a"></div>
 <div class="abs" style="left:209px;top:0;width:1px;height:216px;background:#3a3a3a"></div>
</div>
<span class="t b" style="left:607px;top:422px">Name</span>
<svg style="left:610px;top:446px" width="7" height="6" viewBox="0 0 7 6"><path d="M0 0h7l-3.5 6z" fill="#6c6c6c"/></svg>
<span class="t" style="left:626px;top:442.5px">group</span>
<svg style="left:630px;top:465px" width="5" height="7" viewBox="0 0 5 7"><path d="M0 0v7l5 -3.5z" fill="#6c6c6c"/></svg>
<span class="t" style="left:646px;top:462.5px">GAFFERBOT</span>
<span class="t" style="left:646px;top:482.5px">camera</span>
<svg style="left:818px;top:424px;color:#f0f0f0" width="14" height="8"><use href="#eye"/></svg>
<svg style="left:817px;top:445px;color:#868686" width="14" height="8"><use href="#eye"/></svg>
<svg style="left:817px;top:465px;color:#868686" width="14" height="8"><use href="#eye"/></svg>
<svg style="left:817px;top:485px;color:#868686" width="14" height="8"><use href="#eye"/></svg>
<svg style="left:761px;top:420px" width="15.5" height="15.5"><use href="#cic"/></svg>
<svg style="left:760.5px;top:441px;opacity:0.62" width="15.5" height="15.5"><use href="#cic"/></svg>
<svg style="left:789.5px;top:419.5px" width="15.5" height="15.5" viewBox="0 0 16 16"><path d="M8 0.6 L14.8 3.2 L8 6Z M8 0.6 L1.2 3.2 L8 6Z" fill="#955050"/><path d="M1.2 3.2 L8 6 V15.4 L1.8 11.6Z" fill="#8c4a4a"/><path d="M14.8 3.2 L8 6 V15.4 L14.2 11.6Z" fill="#7c4242"/><path d="M1.2 3.2 L8 6 L14.8 3.2 M8 6V15.4" stroke="#623636" stroke-width="0.7" fill="none"/></svg>
<!-- TIMELINE -->
<div class="panel" id="timeline" style="left:6px;top:643px;width:841px;height:33px;border-radius:2px"></div>
<svg style="left:12px;top:649px" width="4" height="14" viewBox="0 0 4 14"><circle cx="2" cy="2" r="1.4" fill="#393939"/><circle cx="2" cy="7" r="1.4" fill="#393939"/><circle cx="2" cy="12" r="1.4" fill="#393939"/></svg>
<div class="field" style="left:18.5px;top:647.5px;width:31.5px;height:17px">1</div>
<div class="field" style="left:53.5px;top:647.5px;width:32px;height:17px">1</div>
<div class="abs" style="left:88px;top:647px;width:2px;height:18px;background:#f0dc28"></div>
<span class="t b" style="left:94px;top:651px;color:#e8d428;font-size:10px">1</span>
<div class="field" style="left:730px;top:647.5px;width:41px;height:17px">1</div>
<div class="field" style="left:774px;top:647.5px;width:32px;height:17px">100</div>
<div class="field" style="left:809px;top:647.5px;width:32px;height:17px">100</div>
<svg class="pg" width="853" height="682" viewBox="0 0 853 682">
 <g fill="#a0a0a0"><path d="M693.5 650.5h1.8v11h-1.8z M695.3 656l4.7-4v8z"/><path d="M705 651l9 5-9 5 2.2-5z"/><path d="M723.5 650.5h1.8v11h-1.8z M723.5 656l-4.7-4v8z"/></g>
 <path d="M93.4 660.5v4M99.5 660.5v4M105.5 660.5v4M111.6 660.5v4M117.7 656.5v8M123.7 660.5v4M129.8 660.5v4M135.9 660.5v4M141.9 660.5v4M148.0 652.5v12M154.1 660.5v4M160.1 660.5v4M166.2 660.5v4M172.3 660.5v4M178.3 656.5v8M184.4 660.5v4M190.5 660.5v4M196.5 660.5v4M202.6 660.5v4M208.7 652.5v12M214.7 660.5v4M220.8 660.5v4M226.8 660.5v4M232.9 660.5v4M239.0 656.5v8M245.0 660.5v4M251.1 660.5v4M257.2 660.5v4M263.2 660.5v4M269.3 652.5v12M275.4 660.5v4M281.4 660.5v4M287.5 660.5v4M293.6 660.5v4M299.6 656.5v8M305.7 660.5v4M311.8 660.5v4M317.8 660.5v4M323.9 660.5v4M330.0 652.5v12M336.0 660.5v4M342.1 660.5v4M348.1 660.5v4M354.2 660.5v4M360.3 656.5v8M366.3 660.5v4M372.4 660.5v4M378.5 660.5v4M384.5 660.5v4M390.6 652.5v12M396.7 660.5v4M402.7 660.5v4M408.8 660.5v4M414.9 660.5v4M420.9 656.5v8M427.0 660.5v4M433.1 660.5v4M439.1 660.5v4M445.2 660.5v4M451.2 652.5v12M457.3 660.5v4M463.4 660.5v4M469.4 660.5v4M475.5 660.5v4M481.6 656.5v8M487.6 660.5v4M493.7 660.5v4M499.8 660.5v4M505.8 660.5v4M511.9 652.5v12M518.0 660.5v4M524.0 660.5v4M530.1 660.5v4M536.2 660.5v4M542.2 656.5v8M548.3 660.5v4M554.4 660.5v4M560.4 660.5v4M566.5 660.5v4M572.5 652.5v12M578.6 660.5v4M584.7 660.5v4M590.7 660.5v4M596.8 660.5v4M602.9 656.5v8M608.9 660.5v4M615.0 660.5v4M621.1 660.5v4M627.1 660.5v4M633.2 652.5v12M639.3 660.5v4M645.3 660.5v4M651.4 660.5v4M657.5 660.5v4M663.5 656.5v8M669.6 660.5v4M675.7 660.5v4M681.7 660.5v4M687.8 660.5v4" stroke="#262626" stroke-width="1.1" fill="none"/>
</svg>

</body></html>
